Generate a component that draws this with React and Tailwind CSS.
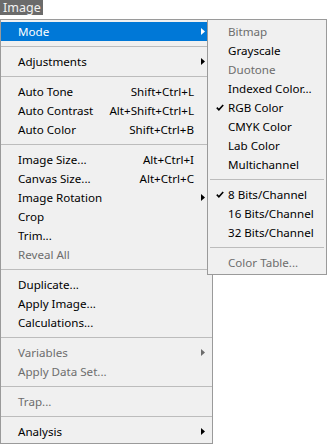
import React from "react";

const Arrow = ({ color }) => (
  <svg width="4" height="7" viewBox="0 0 4 7" className="shrink-0">
    <path d="M0 0 L4 3.5 L0 7 Z" fill={color} />
  </svg>
);

const Check = () => (
  <svg width="8" height="7" viewBox="0 0 8 7" className="shrink-0">
    <path d="M0.8 3.6 L2.9 5.8 L7.2 1" stroke="#000" strokeWidth="1.6" fill="none" />
  </svg>
);

const mainItems = [
  { t: "Mode", arrow: true, hi: true },
  "sep",
  { t: "Adjustments", arrow: true },
  "sep",
  { t: "Auto Tone", k: "Shift+Ctrl+L" },
  { t: "Auto Contrast", k: "Alt+Shift+Ctrl+L" },
  { t: "Auto Color", k: "Shift+Ctrl+B" },
  "sep",
  { t: "Image Size...", k: "Alt+Ctrl+I" },
  { t: "Canvas Size...", k: "Alt+Ctrl+C" },
  { t: "Image Rotation", arrow: true },
  { t: "Crop" },
  { t: "Trim..." },
  { t: "Reveal All", dis: true },
  "sep",
  { t: "Duplicate..." },
  { t: "Apply Image..." },
  { t: "Calculations..." },
  "sep",
  { t: "Variables", arrow: true, dis: true },
  { t: "Apply Data Set...", dis: true },
  "sep",
  { t: "Trap...", dis: true },
  "sep",
  { t: "Analysis", arrow: true },
];

const subItems = [
  { t: "Bitmap", dis: true },
  { t: "Grayscale" },
  { t: "Duotone", dis: true },
  { t: "Indexed Color..." },
  { t: "RGB Color", chk: true },
  { t: "CMYK Color" },
  { t: "Lab Color" },
  { t: "Multichannel" },
  "sep",
  { t: "8 Bits/Channel", chk: true },
  { t: "16 Bits/Channel" },
  { t: "32 Bits/Channel" },
  "sep",
  { t: "Color Table...", dis: true },
];

export default function App() {
  return (
    <div
      className="relative w-[327px] h-[444px] bg-white overflow-hidden text-[11.6px] leading-[19px]"
      style={{ fontFamily: '"Segoe UI", "Noto Sans", "Open Sans", sans-serif' }}
    >
      <div className="w-[43px] h-[15px] bg-[#6b6b6b] text-[#f2f2f2] text-[12.5px] flex items-center pl-[3px] leading-[15px]">
        <span className="leading-[15px]">Image</span>
      </div>
      <div className="mt-[4px] w-[213px] h-[425px] bg-[#f0f0f0] border border-[#9a9a9a] py-[2px] flex flex-col">
        {mainItems.map((it, i) =>
          it === "sep" ? (
            <div key={i} className="h-[11px] flex items-center">
              <div className="w-full h-px bg-[#bcbcbc]" />
            </div>
          ) : (
            <div
              key={i}
              className={
                "h-[19px] flex items-center pl-[17px] pr-[7px] " +
                (it.hi ? "bg-[#0078d7] text-white" : it.dis ? "text-[#6d6d6d]" : "text-black")
              }
            >
              <span className="flex-1 whitespace-nowrap">{it.t}</span>
              {it.k && <span className="whitespace-nowrap mr-[11px]">{it.k}</span>}
              {it.arrow && (
                <Arrow color={it.hi ? "#ffffff" : it.dis ? "#6d6d6d" : "#000000"} />
              )}
            </div>
          )
        )}
      </div>
      <div className="absolute left-[207px] top-[19px] w-[120px] h-[256px] bg-[#f0f0f0] border border-[#9a9a9a] py-[2px] flex flex-col">
        {subItems.map((it, i) =>
          it === "sep" ? (
            <div key={i} className="h-[11px] flex items-center pl-[2px] pr-[2px]">
              <div className="w-full h-px bg-[#bcbcbc]" />
            </div>
          ) : (
            <div
              key={i}
              className={
                "h-[19px] flex items-center " + (it.dis ? "text-[#6d6d6d]" : "text-black")
              }
            >
              <span className="w-[20px] flex justify-end pr-[4px]">{it.chk && <Check />}</span>
              <span className="whitespace-nowrap">{it.t}</span>
            </div>
          )
        )}
      </div>
    </div>
  );
}
